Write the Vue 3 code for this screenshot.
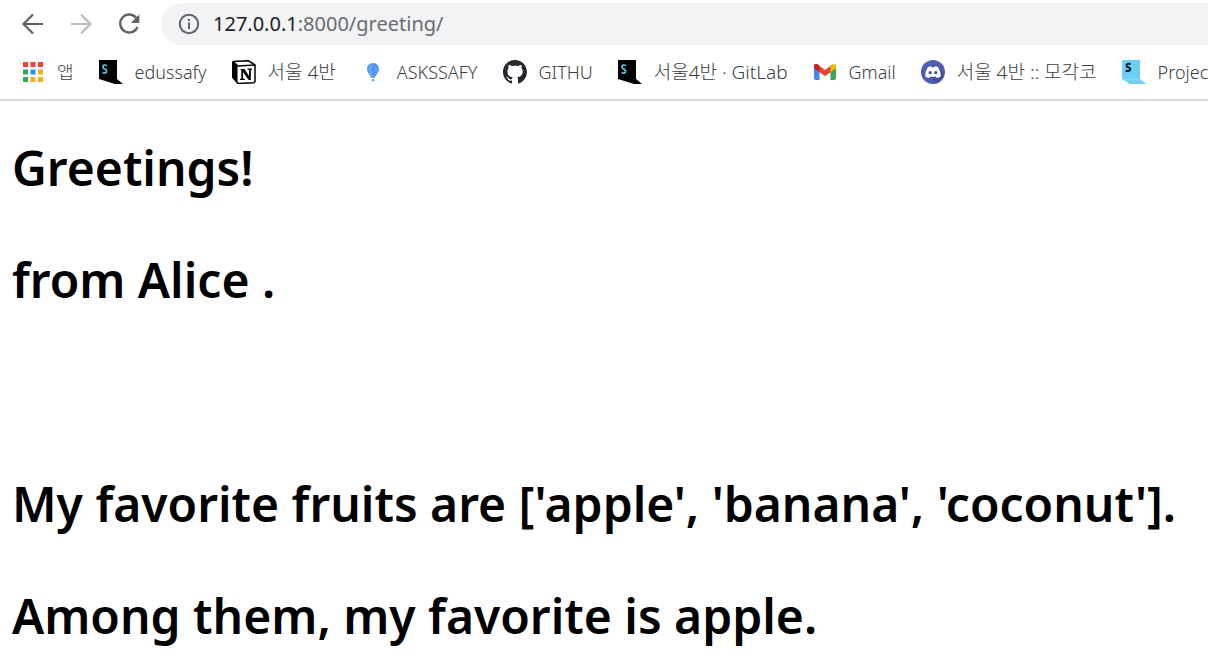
<script setup>
const bookmarks = [
  { icon: 'apps', label: '앱' },
  { icon: 'ssafy', label: 'edussafy' },
  { icon: 'notion', label: '서울 4반', korean: true },
  { icon: 'balloon', label: 'ASKSSAFY' },
  { icon: 'github', label: 'GITHU' },
  { icon: 'ssafy', label: '서울4반 · GitLab', korean: true },
  { icon: 'gmail', label: 'Gmail' },
  { icon: 'discord', label: '서울 4반 :: 모각코', korean: true },
  { icon: 'project', label: 'Project' },
]
const appColors = ['#f44336', '#f44336', '#f44336', '#34a853', '#1a90ff', '#fbad18', '#34a853', '#fbad18', '#fbad18']
const fruits = ['apple', 'banana', 'coconut']
const fruitList = `[${fruits.map((f) => `'${f}'`).join(', ')}]`
</script>

<template>
  <div class="browser">
    <header class="chrome">
      <div class="toolbar">
        <nav class="controls" aria-label="Navigation">
          <button type="button" aria-label="Back">
            <svg viewBox="0 0 24 24" fill="none" stroke="#5f6368" stroke-width="2.2"><path d="M22 12H3.500M12 2.500L2.500 12L12 21.500" /></svg>
          </button>
          <button type="button" aria-label="Forward" disabled>
            <svg viewBox="0 0 24 24" fill="none" stroke="#babcbe" stroke-width="2.200"><path d="M2 12H20.500M12 2.500L21.500 12L12 21.500" /></svg>
          </button>
          <button type="button" aria-label="Reload">
            <svg viewBox="0 0 24 24"><path d="M19.500 6.200A9 9 0 1 0 20.500 15" fill="none" stroke="#5f6368" stroke-width="2.300" /><path d="M22.300 2.500V11H13.800Z" fill="#5f6368" /></svg>
          </button>
        </nav>
        <div class="address">
          <button type="button" class="info" aria-label="Site information">
            <svg viewBox="0 0 24 24"><circle cx="12" cy="12" r="9.200" fill="none" stroke="#5f6368" stroke-width="2" /><path d="M11 10.500h2v6.500h-2zM11 7h2v2h-2z" fill="#5f6368" /></svg>
          </button>
          <a class="url" href="#"><span class="host">127.0.0.1</span>:8000/greeting/</a>
        </div>
      </div>

      <nav class="bookmarks" aria-label="Bookmarks">
        <a v-for="b in bookmarks" :key="b.label" class="bookmark" :class="{ korean: b.korean }" href="#">
          <svg v-if="b.icon === 'apps'" viewBox="0 0 24 24">
            <rect v-for="(c, i) in appColors" :key="i" :x="2 + (i % 3) * 7.500" :y="2 + Math.floor(i / 3) * 7.500" width="5" height="5" :fill="c" />
          </svg>
          <svg v-else-if="b.icon === 'ssafy'" viewBox="0 0 24 24">
            <path d="M0 0H18V19L24 24H16L0 19Z" />
            <path d="M8 5.500Q4 4 4 7Q4 8.500 5.700 9Q7.800 9.800 7.500 11.500Q7 14 3.500 12.700" fill="none" stroke="#5fc8f0" stroke-width="1.700" />
          </svg>
          <svg v-else-if="b.icon === 'project'" viewBox="0 0 24 24">
            <path d="M0 0H18V19H0Z" fill="#6dcff6" />
            <path d="M0 19H18L24 24H8Z" fill="#6dcff6" />
            <path d="M0 19H18L20 20.500H3Z" fill="#8edaf9" />
            <path d="M8.500 4Q4.500 3 4.500 5.500Q4.500 7 6.500 7.500Q8.800 8.300 8 10Q7 11.700 3.500 10.800" fill="none" stroke="#0b1c25" stroke-width="2" />
          </svg>
          <svg v-else-if="b.icon === 'notion'" viewBox="0 0 24 24">
            <path d="M1.200 1.500L16.500.700L23 5V21.500L22 22.700L6 23.500L1 17.500Z" fill="#fff" stroke="#000" stroke-width="1.500" />
            <path d="M0 1.500L5.500 6V23.500L0 17.500Z" />
            <path d="M1 1.500L6 6L23 5" fill="none" stroke="#000" stroke-width="1.500" />
            <path d="M8.500 9H12.500L17 16V10L15.500 9.500V8.500H20V9.500L18.800 10V20H16.700L11 12V18.500L12.800 19V20H8V19L9.300 18.500V10L8.500 9.700Z" />
          </svg>
          <svg v-else-if="b.icon === 'balloon'" viewBox="0 0 24 24">
            <path d="M12 3C8.500 3 6 5.500 6 9C6 13 9.500 15 10.500 18H13.500C14.500 15 18 13 18 9C18 5.500 15.500 3 12 3Z" fill="#5799f3" />
            <path d="M11 3.300C8 6 8 12 11.200 17.500" fill="none" stroke="#84b8fa" />
            <circle cx="12" cy="20.300" r="1.200" fill="#4aa8e8" />
          </svg>
          <svg v-else-if="b.icon === 'github'" viewBox="0 0 16 16">
            <path fill="#24292f" fill-rule="evenodd" d="M8 0C3.580 0 0 3.580 0 8c0 3.540 2.290 6.530 5.470 7.590.4.070.55-.17.55-.38 0-.19-.01-.82-.01-1.490-2.010.37-2.530-.49-2.690-.94-.09-.23-.48-.94-.82-1.130-.28-.15-.68-.52-.01-.53.63-.01 1.080.58 1.230.82.72 1.210 1.870.87 2.330.66.07-.52.28-.87.51-1.070-1.780-.2-3.640-.89-3.640-3.950 0-.87.31-1.590.82-2.150-.08-.2-.36-1.020.08-2.120 0 0 .67-.21 2.200.82.64-.18 1.320-.27 2-.27s1.360.09 2 .27c1.530-1.040 2.200-.82 2.200-.82.44 1.100.16 1.920.08 2.120.51.56.82 1.270.82 2.150 0 3.070-1.870 3.750-3.650 3.950.29.25.54.73.54 1.480 0 1.070-.01 1.930-.01 2.200 0 .21.15.46.55.38A8.010 8.010 0 0 0 16 8c0-4.420-3.580-8-8-8z" />
          </svg>
          <svg v-else-if="b.icon === 'gmail'" viewBox="0 0 24 24">
            <path d="M1 7L6.500 10V20H3Q1 20 1 18Z" fill="#4285f4" />
            <path d="M17.500 10L23 7V18Q23 20 21 20H17.500Z" fill="#34a853" />
            <path d="M6 5.500L12 10L18 5.500V12L12 16L6 12Z" fill="#ea4335" />
            <path d="M1 6C1 3.700 3.500 3.300 5 4.500L6.500 5.700V12L1 8Z" fill="#c5221f" />
            <path d="M23 6C23 3.700 20.500 3.300 19 4.500L17.500 5.700V12L23 8Z" fill="#fbbc04" />
          </svg>
          <svg v-else viewBox="0 0 24 24">
            <circle cx="12" cy="12" r="12" fill="#4f5eb5" />
            <path d="M18 6.500L23 14Q21 21 16 23L9 17Z" fill="#434f99" />
            <path d="M6.800 7.200Q8.500 6.200 10 6.200L10.600 7.200H13.400L14 6.200Q15.500 6.200 17.200 7.200Q20 11.500 19.800 16.200Q18 17.900 15.800 18L14.800 16.600Q12 17.300 9.200 16.600L8.200 18Q6 17.900 4.200 16.200Q4 11.500 6.800 7.200Z" fill="#fff" />
            <circle cx="9.200" cy="12.700" r="1.600" fill="#414d96" />
            <circle cx="14.800" cy="12.700" r="1.600" fill="#414d96" />
          </svg>
          <span>{{ b.label }}</span>
        </a>
      </nav>
    </header>

    <main class="page">
      <h1>Greetings!</h1>
      <h1>from Alice .</h1>
      <h1 class="blank">&nbsp;</h1>
      <h1>My favorite fruits are {{ fruitList }}.</h1>
      <h1>Among them, my favorite is {{ fruits[0] }}.</h1>
    </main>
  </div>
</template>

<style>
body {
  margin: 0;
  background: #fff;
}
</style>

<style scoped>
.browser {
  overflow: hidden;
  font-family: 'Noto Sans', 'Noto Sans CJK KR', sans-serif;
}
.chrome {
  border-bottom: 2px solid #dadbdd;
}
.toolbar {
  display: flex;
  align-items: center;
  gap: 20px;
  padding: 3px 0 0 21px;
}
.controls {
  display: flex;
  gap: 24px;
}
button {
  display: flex;
  padding: 0;
  border: 0;
  background: none;
}
svg {
  display: block;
  flex: none;
  width: 24px;
  height: 24px;
}
.address {
  display: flex;
  flex: 1;
  align-items: center;
  gap: 12px;
  height: 42px;
  padding-left: 16px;
  border-radius: 21px 0 0 21px;
  background: #f1f3f4;
}
.url {
  color: #696c70;
  font-size: 20px;
  line-height: 28px;
  text-decoration: none;
}
.host {
  color: #202124;
}
.bookmarks {
  display: flex;
  align-items: center;
  gap: 25px;
  height: 54px;
  padding-left: 21px;
}
.bookmark {
  display: flex;
  flex: none;
  align-items: center;
  gap: 12px;
  color: #3c4043;
  font-size: 18px;
  font-weight: 300;
  line-height: 24px;
  white-space: nowrap;
  text-decoration: none;
}
.korean {
  font-size: 19px;
}
.page {
  padding: 35px 12px 0;
}
h1 {
  margin: 0 0 48px;
  color: #000;
  font-size: 48px;
  font-weight: 600;
  line-height: 64px;
  white-space: nowrap;
}
h1:last-child {
  margin-bottom: 0;
}
</style>
